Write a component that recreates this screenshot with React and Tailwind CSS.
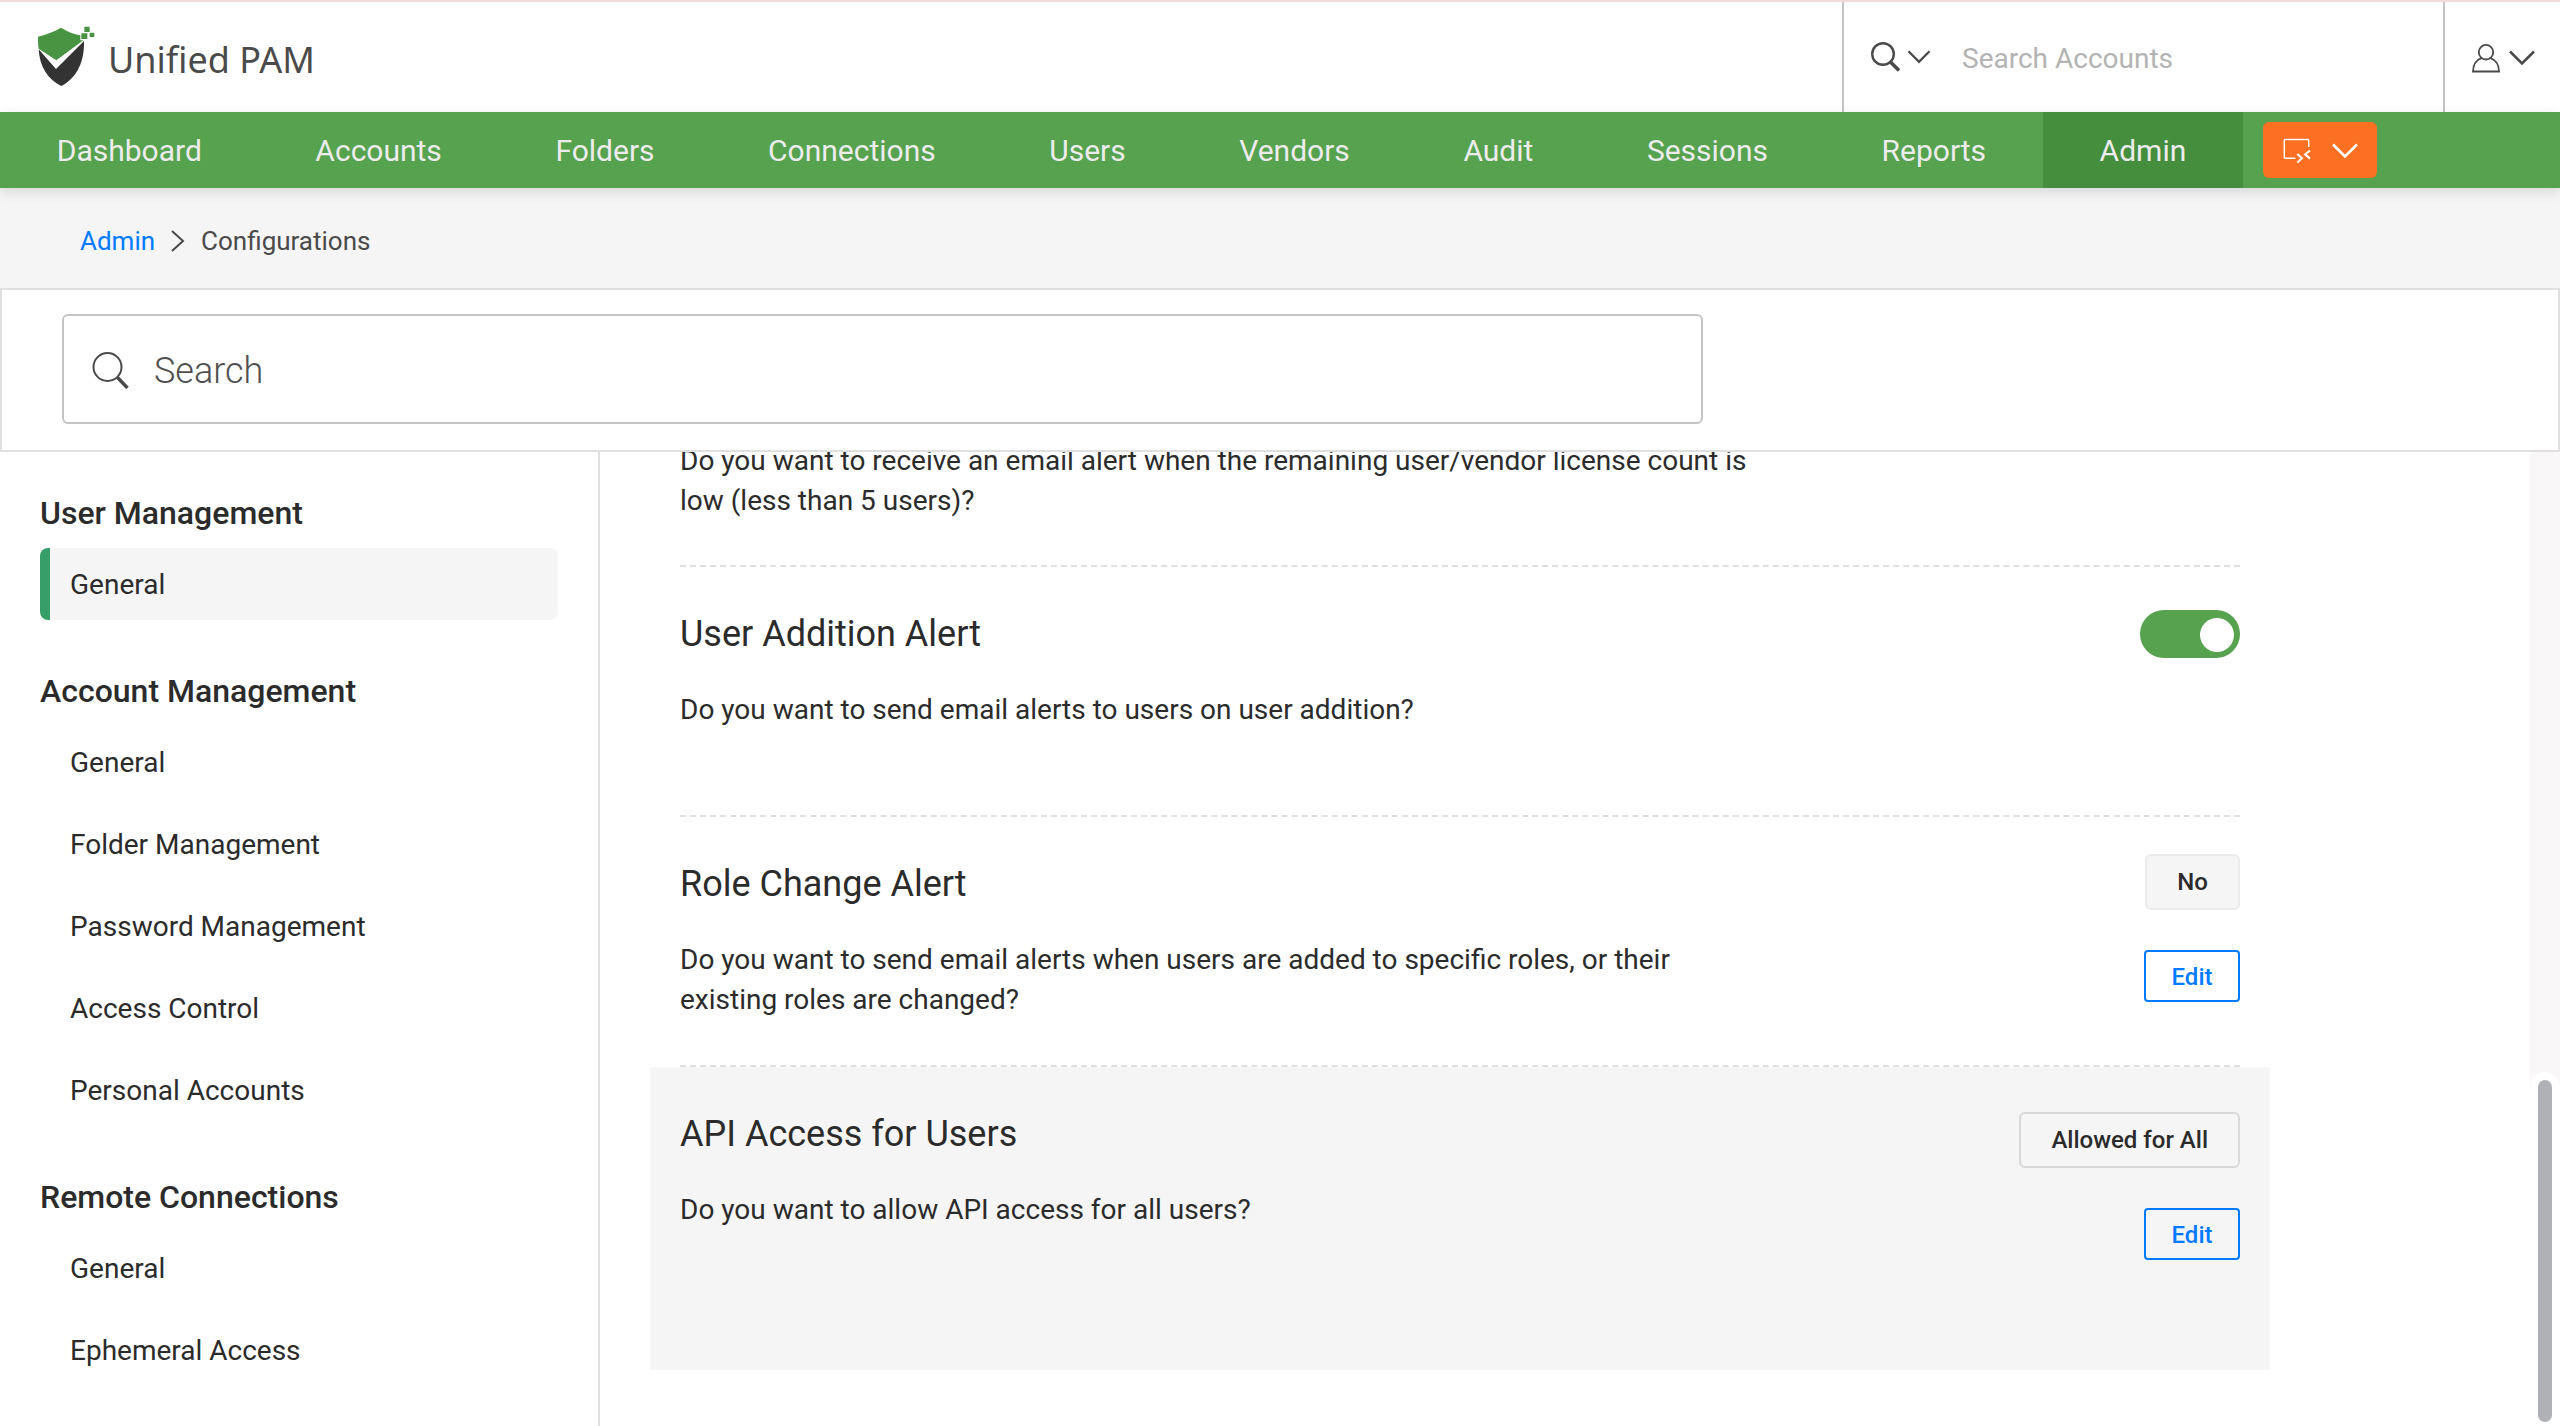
import React from "react";

const NAV = ["Dashboard", "Accounts", "Folders", "Connections", "Users", "Vendors", "Audit", "Sessions", "Reports", "Admin"];

const SIDEBAR = [
  { title: "User Management", items: ["General"], active: "General" },
  { title: "Account Management", items: ["General", "Folder Management", "Password Management", "Access Control", "Personal Accounts"] },
  { title: "Remote Connections", items: ["General", "Ephemeral Access"] },
];

function Logo() {
  return (
    <svg viewBox="54 48 171 180" className="h-[60px] w-[57px] shrink-0" aria-hidden="true">
      <path d="M54 80C80 73 104 64 123 53C140 64 160 72 181 76V91H190L109 151L56 116C54 104 54 92 54 80Z" fill="#499442" />
      <path d="M56 118L108 177L192 93C194 152 172 204 124 228C84 210 59 170 56 118Z" fill="#333333" />
      <path d="M193 50h16v16h-16zM184 70h18v17h-18zM209 68h14v13h-14z" fill="#499442" />
    </svg>
  );
}

function Chevron({ className }) {
  return (
    <svg viewBox="0 0 26 16" className={className} fill="none" stroke="currentColor" strokeWidth="2.6" aria-hidden="true">
      <path d="M1 1.5L13 13.5L25 1.5" />
    </svg>
  );
}

function HeaderSearchIcon() {
  return (
    <svg viewBox="0 0 30 30" className="size-[30px]" fill="none" stroke="currentColor" aria-hidden="true">
      <circle cx="12" cy="12" r="10.8" strokeWidth="2.4" />
      <path d="M19.5 20L28 28.5" strokeWidth="3.6" />
    </svg>
  );
}

function LargeSearchIcon() {
  return (
    <svg viewBox="0 0 37 37" className="size-[37px] shrink-0" fill="none" stroke="currentColor" aria-hidden="true">
      <circle cx="15.5" cy="15" r="14" strokeWidth="2" />
      <path d="M25.5 25.5L35.5 36" strokeWidth="3.4" />
    </svg>
  );
}

function UserIcon() {
  return (
    <svg viewBox="0 0 28 29" className="h-[29px] w-7" fill="none" stroke="currentColor" strokeWidth="1.8" aria-hidden="true">
      <ellipse cx="14" cy="8.2" rx="7.2" ry="7.3" />
      <path d="M9.5 14.2C4.5 16 1 20.5 1 27.5H27C27 20.5 23.5 16 18.5 14.2" />
    </svg>
  );
}

function RemoteIcon() {
  return (
    <svg viewBox="159 114 86 79" className="h-[26px] w-7" fill="none" stroke="currentColor" aria-hidden="true">
      <path d="M238 141V121Q238 118 235 118H166Q163 118 163 121V173Q163 176 166 176H197" strokeWidth="4.5" />
      <path d="M203 163L217 176L203 189M242 152L227 164L242 177" strokeWidth="6.5" />
    </svg>
  );
}

function Header() {
  return (
    <header className="flex h-28 shrink-0 border-t-2 border-[#f3dcde] text-[#4a4a4a]">
      <div className="flex flex-1 items-center gap-[13px] pb-0.5 pl-[38px]">
        <Logo />
        <span className="pt-2 font-['Noto_Sans'] text-[36px] leading-[52px]">Unified PAM</span>
      </div>
      <div className="flex w-[603px] items-center border-x-2 border-[#c4c4c4] pl-[27px]">
        <button type="button" aria-label="Search type" className="flex items-center gap-[6px]">
          <HeaderSearchIcon />
          <Chevron className="h-[14px] w-6" />
        </button>
        <input
          type="search"
          aria-label="Search Accounts"
          placeholder="Search Accounts"
          className="ml-[31px] min-w-0 flex-1 bg-transparent pt-1 text-[28px] leading-10 outline-none placeholder:text-[#b3b3b3]"
        />
      </div>
      <button type="button" aria-label="User menu" className="flex w-[115px] items-center gap-[9px] pt-0.5 pl-[27px]">
        <UserIcon />
        <Chevron className="h-4 w-[26px]" />
      </button>
    </header>
  );
}

function NavBar() {
  return (
    <nav className="relative z-10 flex h-[76px] shrink-0 items-center bg-[#56a24e] shadow-[0_4px_12px_rgba(0,0,0,0.12)]">
      <div className="flex h-full w-full max-w-[2243px] text-[30px] leading-10 text-[#ececec]">
        {NAV.map((label) => (
          <a
            key={label}
            href="#"
            className={
              label === "Admin"
                ? "flex grow items-center justify-center bg-[#448e3d] px-14 pt-0.5"
                : "flex grow items-center justify-center px-14 pt-0.5"
            }
          >
            {label}
          </a>
        ))}
      </div>
      <button type="button" aria-label="Remote session" className="ml-5 flex h-14 w-[114px] shrink-0 items-center justify-between rounded-md bg-[#fb7022] pt-0.5 pr-[19px] pl-5 text-white">
        <RemoteIcon />
        <Chevron className="h-4 w-[26px]" />
      </button>
    </nav>
  );
}

function Breadcrumb() {
  return (
    <div className="flex h-[100px] shrink-0 items-center bg-[#f5f5f5] pt-1.5 pl-20 text-[26px] leading-9 text-[#4a4a4a]">
      <a href="#" className="text-[#007bff]">Admin</a>
      <svg viewBox="0 0 14 22" className="mx-4 h-[22px] w-[14px]" fill="none" stroke="currentColor" strokeWidth="2" aria-hidden="true">
        <path d="M1 1L12 11L1 21" />
      </svg>
      <span>Configurations</span>
    </div>
  );
}

function SearchBand() {
  return (
    <div className="shrink-0 border-2 border-[#e0e0e0] bg-white px-[60px] pt-6 pb-[26px]">
      <label className="flex h-[110px] w-full max-w-[1641px] items-center gap-[25px] rounded-md border-2 border-[#c4c4c4] pt-0.5 pl-7 text-[#4a4a4a]">
        <LargeSearchIcon />
        <input
          type="search"
          aria-label="Search"
          placeholder="Search"
          className="min-w-0 flex-1 bg-transparent pt-0.5 text-[36px] leading-[48px] font-light outline-none placeholder:text-[#4f4f4f]"
        />
      </label>
    </div>
  );
}

function Sidebar() {
  return (
    <aside className="w-[600px] shrink-0 overflow-hidden border-r-2 border-[#e0e0e0] px-10 pt-[41px]">
      {SIDEBAR.map((group) => (
        <section key={group.title} className="mb-[51px]">
          <h2 className="mb-[15px] text-[32px] leading-10 font-medium">{group.title}</h2>
          <ul className="flex flex-col gap-[10px]">
            {group.items.map((item) => (
              <li key={item}>
                <a
                  href="#"
                  className={
                    group.active === item
                      ? "flex h-[72px] items-center rounded-lg border-l-[10px] border-[#389e69] bg-[#f5f5f5] pt-0.5 pl-5 text-[28px] leading-10"
                      : "flex h-[72px] items-center pt-0.5 pl-[30px] text-[28px] leading-10"
                  }
                >
                  {item}
                </a>
              </li>
            ))}
          </ul>
        </section>
      ))}
    </aside>
  );
}

function EditButton({ label }) {
  return (
    <button type="button" aria-label={"Edit " + label} className="h-[52px] w-24 rounded border-2 border-[#007bff] pt-0.5 text-[24px] leading-8 font-medium text-[#007bff]">
      Edit
    </button>
  );
}

function RowText({ title, children }) {
  return (
    <div className="max-w-[1092px]">
      {title && <h3 className="mb-8 text-[36px] leading-[48px]">{title}</h3>}
      <p className="text-[28px] leading-10">{children}</p>
    </div>
  );
}

function Settings() {
  return (
    <main className="flex min-w-0 flex-1 flex-col justify-end overflow-hidden pl-[50px]">
      <div className="flex w-full max-w-[1620px] shrink-0 flex-col pb-14">
        <section className="mx-[30px] border-b-2 border-dashed border-[#e0e0e0] pb-11">
          <RowText>
            Do you want to receive an email alert when the remaining user/vendor license count is low (less than 5 users)?
          </RowText>
        </section>

        <section className="mx-[30px] flex min-h-[250px] justify-between border-b-2 border-dashed border-[#e0e0e0] pt-[43px]">
          <RowText title="User Addition Alert">Do you want to send email alerts to users on user addition?</RowText>
          <label className="relative block h-12 w-[100px] shrink-0 cursor-pointer">
            <input type="checkbox" defaultChecked aria-label="User Addition Alert" className="peer h-12 w-[100px] appearance-none rounded-full bg-[#bdbdbd] checked:bg-[#56a24e]" />
            <span className="absolute top-2 left-[6px] size-[34px] rounded-full bg-white peer-checked:left-[60px]" />
          </label>
        </section>

        <section className="mx-[30px] flex min-h-[250px] justify-between border-b-2 border-dashed border-[#e0e0e0]">
          <div className="pt-[43px]">
            <RowText title="Role Change Alert">
              Do you want to send email alerts when users are added to specific roles, or their existing roles are changed?
            </RowText>
          </div>
          <div className="flex shrink-0 flex-col items-end gap-10 pt-[37px]">
            <span className="flex h-14 items-center rounded-md border-2 border-[#ebebeb] bg-[#f5f5f5] px-[30px] text-[24px] leading-8 font-medium">No</span>
            <EditButton label="Role Change Alert" />
          </div>
        </section>

        <section className="flex min-h-[303px] justify-between bg-[#f5f5f5] px-[30px]">
          <div className="pt-[43px]">
            <RowText title="API Access for Users">Do you want to allow API access for all users?</RowText>
          </div>
          <div className="flex shrink-0 flex-col items-end gap-10 pt-[45px]">
            <span className="flex h-14 items-center rounded-md border-2 border-[#d9d9d9] px-[30px] text-[24px] leading-8 font-medium">Allowed for All</span>
            <EditButton label="API Access for Users" />
          </div>
        </section>
      </div>
    </main>
  );
}

export default function App() {
  return (
    <div className="flex h-screen flex-col overflow-hidden bg-white font-['Roboto',sans-serif] text-[#2b2b2b]">
      <Header />
      <NavBar />
      <Breadcrumb />
      <SearchBand />
      <div className="flex min-h-0 flex-1">
        <Sidebar />
        <Settings />
        <div className="flex w-[30px] shrink-0 flex-col justify-end bg-[#f9f7f8]" aria-hidden="true">
          <div className="flex h-[354px] justify-center rounded-t-2xl bg-white pt-2 pb-1">
            <div className="w-[14px] rounded-full bg-[#b0b1b7]" />
          </div>
        </div>
      </div>
    </div>
  );
}
